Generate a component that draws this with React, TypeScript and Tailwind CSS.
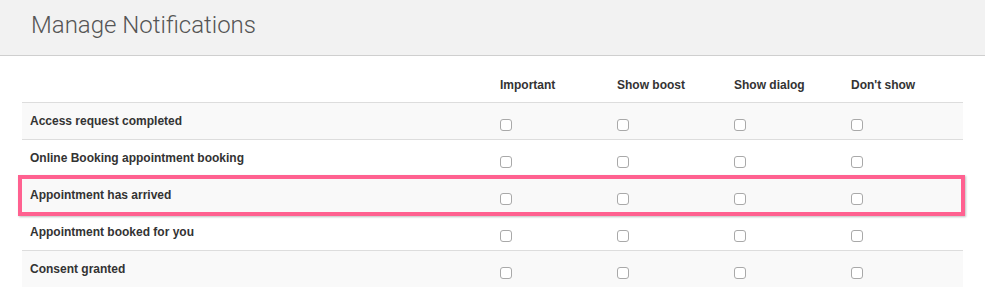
const columns = ['Important', 'Show boost', 'Show dialog', "Don't show"];

const rows = [
  'Access request completed',
  'Online Booking appointment booking',
  'Appointment has arrived',
  'Appointment booked for you',
  'Consent granted',
];

const grid = 'grid grid-cols-[470px_117px_117px_117px_119px]';

function Checkbox() {
  return (
    <span className="mt-[16px] block size-[12px] rounded-[3px] border border-[#a9a9a9] bg-white" />
  );
}

export default function App() {
  return (
    <div className="min-h-screen w-[985px] bg-white font-['Liberation_Sans',Arial,sans-serif]">
      <div className="h-[56px] border-b border-[#cfcfcf] bg-[#f2f2f2] pl-[31px] pt-[10px]">
        <h1 className="font-['Roboto',sans-serif] text-[24px] font-light leading-[30px] text-[#555]">
          Manage Notifications
        </h1>
      </div>

      <div className="px-[22px] pt-[12px]">
        <div className={`${grid} h-[34px] items-center text-[12px] font-bold text-[#333]`}>
          <div />
          {columns.map((c) => (
            <div key={c} className="pl-[8px]">
              {c}
            </div>
          ))}
        </div>

        {rows.map((label, i) => (
          <div
            key={label}
            className={`relative ${grid} h-[37px] border-t border-[#ddd] text-[12px] font-bold text-[#333] ${
              i % 2 === 0 ? 'bg-[#f9f9f9]' : 'bg-white'
            }`}
          >
            <div className="pl-[8px] pt-[11px] leading-[14px]">{label}</div>
            {columns.map((c) => (
              <div key={c} className="pl-[8px]">
                <Checkbox />
              </div>
            ))}
            {i === 2 && (
              <div className="pointer-events-none absolute z-10 -left-[4px] -right-[2px] -top-[2px] bottom-[-3px] border-[4px] border-[#ff6190] shadow-[1px_1px_2px_rgba(0,0,0,0.25)]" />
            )}
          </div>
        ))}
      </div>
    </div>
  );
}
